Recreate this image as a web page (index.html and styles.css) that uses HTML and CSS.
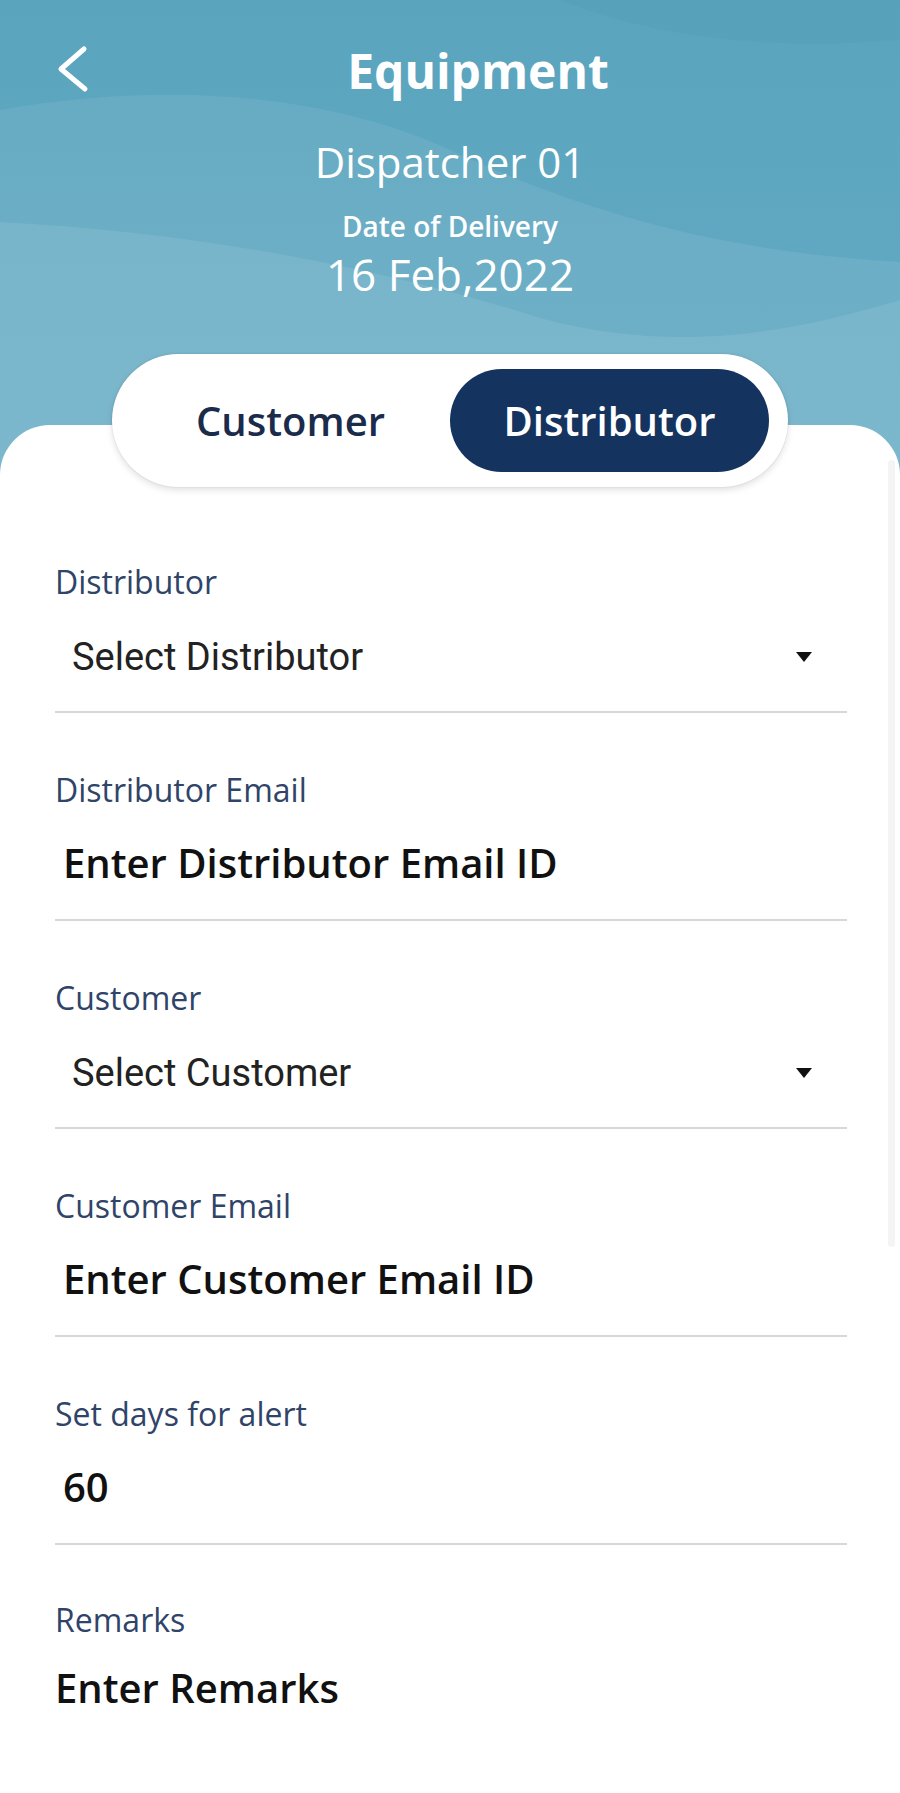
FILE: index.html
```html
<!DOCTYPE html>
<html lang="en">
<head>
    <meta charset="UTF-8">
    <meta name="viewport" content="width=device-width, initial-scale=1.0">
    <title>Equipment</title>
    <link rel="stylesheet" href="styles.css">
</head>
<body>
    <!-- Header -->
    <header class="top">
        <svg class="waves" viewBox="0 0 900 500" preserveAspectRatio="none">
            <defs>
                <linearGradient id="bg" x1="0" y1="0" x2="0" y2="1">
                    <stop offset="0" stop-color="#5aa4be"/>
                    <stop offset="1" stop-color="#66acc4"/>
                </linearGradient>
            </defs>
            <rect width="900" height="500" fill="url(#bg)"/>
            <path d="M0,110 C170,80 330,95 450,150 C570,205 700,250 900,262 V500 H0 Z" fill="#ffffff" fill-opacity="0.07"/>
            <path d="M0,222 C200,232 390,270 540,318 C680,356 800,330 900,300 V500 H0 Z" fill="#ffffff" fill-opacity="0.09"/>
            <path d="M560,0 C660,40 780,50 900,40 V0 Z" fill="#2b6f92" fill-opacity="0.06"/>
        </svg>

        <div class="top-bar">
            <a href="#" class="back-btn">
                <svg width="36" height="50" viewBox="0 0 36 50">
                    <polyline points="29,5 6,25 30,45" fill="none" stroke="#ffffff" stroke-width="5" stroke-linecap="round" stroke-linejoin="round"/>
                </svg>
            </a>
            <h1 class="title">Equipment</h1>
            <span class="top-spacer"></span>
        </div>

        <div class="dispatch">
            <p class="dispatch-name">Dispatcher 01</p>
            <p class="dispatch-label">Date of Delivery</p>
            <p class="dispatch-date">16 Feb,2022</p>
        </div>
    </header>

    <main class="sheet">
        <div class="tabs">
            <div class="tab">Customer</div>
            <div class="tab active">Distributor</div>
        </div>

        <form class="form">
            <div class="field">
                <label class="field-label">Distributor</label>
                <div class="select">
                    <span>Select Distributor</span>
                    <span class="caret"></span>
                </div>
            </div>

            <div class="field">
                <label class="field-label">Distributor Email</label>
                <div class="input">Enter Distributor Email ID</div>
            </div>

            <div class="field">
                <label class="field-label">Customer</label>
                <div class="select">
                    <span>Select Customer</span>
                    <span class="caret"></span>
                </div>
            </div>

            <div class="field">
                <label class="field-label">Customer Email</label>
                <div class="input">Enter Customer Email ID</div>
            </div>

            <div class="field">
                <label class="field-label">Set days for alert</label>
                <div class="input">60</div>
            </div>

            <div class="field field-remarks">
                <label class="field-label">Remarks</label>
                <div class="input input-plain">Enter Remarks</div>
            </div>
        </form>
    </main>

    <div class="scrollbar"></div>
</body>
</html>
```

FILE: styles.css
```css
* {
    margin: 0;
    padding: 0;
    box-sizing: border-box;
}

body {
    font-family: "Open Sans", Arial, sans-serif;
    width: 900px;
    height: 1793px;
    overflow: hidden;
    background: #ffffff;
}

/* Header */
.top {
    position: relative;
    padding: 41px 0 200px;
    color: #ffffff;
    overflow: hidden;
}

.waves {
    position: absolute;
    top: 0;
    left: 0;
    width: 100%;
    height: 100%;
}

.top-bar,
.dispatch {
    position: relative;
}

.top-bar {
    display: flex;
    align-items: flex-start;
}

.back-btn {
    width: 112px;
    padding-left: 55px;
    margin-top: 3px;
    display: flex;
}

.title {
    flex: 1;
    text-align: center;
    font-size: 48px;
    font-weight: 700;
    line-height: 60px;
}

.top-spacer {
    width: 56px;
}

.dispatch {
    margin-top: 35px;
    text-align: center;
}

.dispatch-name {
    font-size: 42px;
    line-height: 52px;
}

.dispatch-label {
    margin-top: 21px;
    font-size: 28px;
    font-weight: 600;
    line-height: 34px;
}

.dispatch-date {
    margin-top: 5px;
    font-size: 44px;
    line-height: 52px;
}

/* Sheet */
.sheet {
    position: relative;
    display: flow-root;
    margin-top: -75px;
    padding: 0 53px 0 55px;
    background: #ffffff;
    border-radius: 50px 50px 0 0;
}

.tabs {
    display: flex;
    margin: -71px 59px 0 57px;
    padding: 15px 19px;
    background: #ffffff;
    border-radius: 70px;
    box-shadow: 0 3px 7px rgba(0, 0, 0, 0.12), 0 0 2px rgba(0, 0, 0, 0.12);
}

.tab {
    flex: 1;
    height: 103px;
    display: flex;
    align-items: center;
    justify-content: center;
    border-radius: 52px;
    font-size: 40px;
    font-weight: 600;
    color: #1b2b4b;
}

.tab.active {
    background: #15335f;
    color: #ffffff;
}

/* Form */
.form {
    margin-top: 75px;
}

.field + .field {
    margin-top: 57px;
}

.field-label {
    display: block;
    font-size: 32px;
    line-height: 40px;
    color: #2f4468;
}

.select {
    margin-top: 32px;
    padding: 0 35px 31px 17px;
    display: flex;
    align-items: center;
    justify-content: space-between;
    border-bottom: 2px solid #d8d8d8;
    font-family: Roboto, Arial, sans-serif;
    font-size: 38px;
    line-height: 46px;
    color: #222222;
}

.caret {
    width: 0;
    height: 0;
    border-left: 8.5px solid transparent;
    border-right: 8.5px solid transparent;
    border-top: 10px solid #111111;
}

.input {
    margin-top: 29px;
    padding: 0 0 32px 8px;
    border-bottom: 2px solid #d8d8d8;
    font-size: 40px;
    font-weight: 600;
    line-height: 48px;
    color: #111111;
}

.field + .field-remarks {
    margin-top: 55px;
}

.input-plain {
    margin-top: 24px;
    padding-left: 0;
    border-bottom: none;
}

.scrollbar {
    position: absolute;
    top: 460px;
    right: 5px;
    width: 7px;
    height: 787px;
    border-radius: 4px;
    background: #f4f4f4;
}
```
